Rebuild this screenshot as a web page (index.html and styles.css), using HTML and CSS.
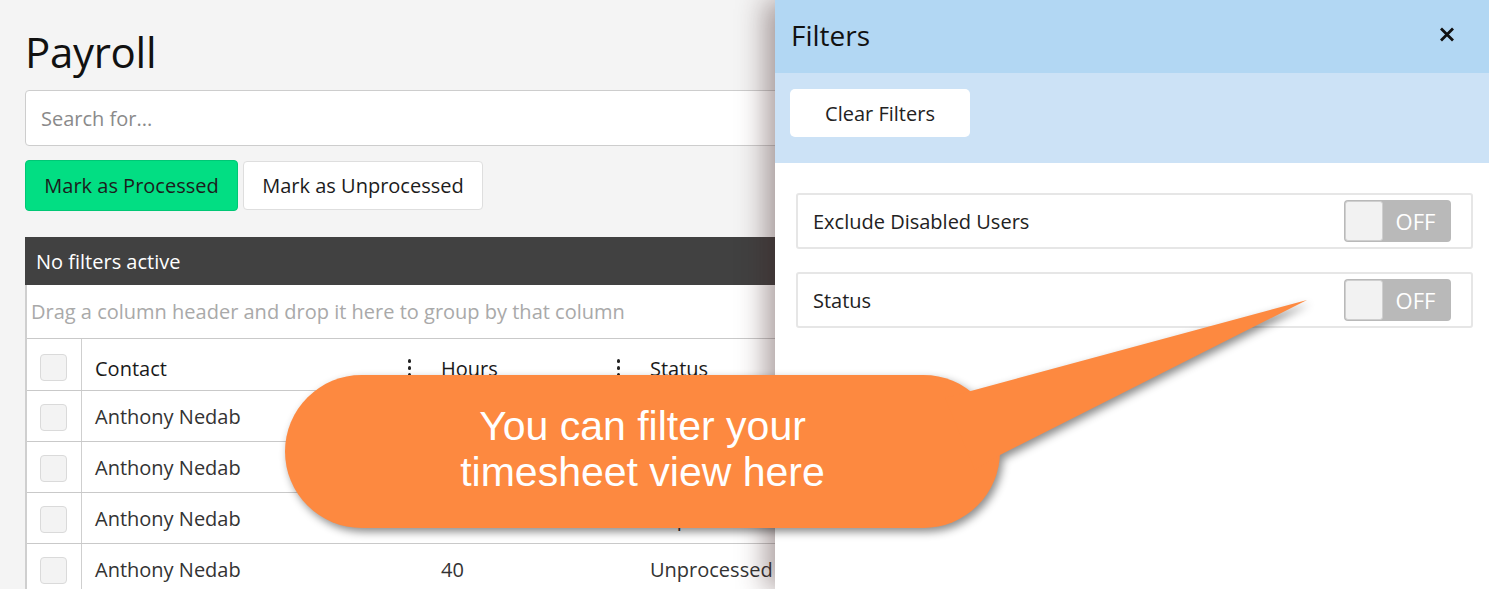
FILE: index.html
```html
<!DOCTYPE html>
<html lang="en">
<head>
<meta charset="utf-8">
<title>Payroll</title>
<link rel="stylesheet" href="styles.css">
</head>
<body>
<main class="page">
  <h1 class="title">Payroll</h1>
  <input class="search" type="text" placeholder="Search for...">
  <div class="actions">
    <button class="btn btn-green">Mark as Processed</button>
    <button class="btn btn-white">Mark as Unprocessed</button>
  </div>
  <section class="grid">
    <div class="grid-bar">No filters active</div>
    <div class="grid-frame">
      <div class="group-row">Drag a column header and drop it here to group by that column</div>
      <div class="row head">
        <div class="cell chk"><span class="box"></span></div>
        <div class="cell">Contact<span class="kebab"><i></i><i></i><i></i></span></div>
        <div class="cell">Hours<span class="kebab"><i></i><i></i><i></i></span></div>
        <div class="cell">Status</div>
      </div>
      <div class="row">
        <div class="cell chk"><span class="box"></span></div>
        <div class="cell">Anthony Nedab</div>
        <div class="cell">40</div>
        <div class="cell"></div>
      </div>
      <div class="row">
        <div class="cell chk"><span class="box"></span></div>
        <div class="cell">Anthony Nedab</div>
        <div class="cell"></div>
        <div class="cell"></div>
      </div>
      <div class="row">
        <div class="cell chk"><span class="box"></span></div>
        <div class="cell">Anthony Nedab</div>
        <div class="cell">40</div>
        <div class="cell">Unprocessed</div>
      </div>
      <div class="row">
        <div class="cell chk"><span class="box"></span></div>
        <div class="cell">Anthony Nedab</div>
        <div class="cell">40</div>
        <div class="cell">Unprocessed</div>
      </div>
    </div>
  </section>
</main>

<aside class="drawer">
  <header class="drawer-head">
    <h2 class="drawer-title">Filters</h2>
    <button class="close" aria-label="Close">
      <svg width="16" height="15" viewBox="0 0 16 15"><path d="M2 1.5 L14 13.5 M14 1.5 L2 13.5" stroke="#111" stroke-width="2.8" stroke-linecap="butt"/></svg>
    </button>
  </header>
  <div class="drawer-tools">
    <button class="clear">Clear Filters</button>
  </div>
  <div class="drawer-body">
    <div class="filter">
      <span class="filter-label">Exclude Disabled Users</span>
      <span class="toggle"><span class="knob"></span><span class="off">OFF</span></span>
    </div>
    <div class="filter">
      <span class="filter-label">Status</span>
      <span class="toggle"><span class="knob"></span><span class="off">OFF</span></span>
    </div>
  </div>
</aside>

<div class="callout">
  <svg class="callout-shape" width="1030" height="250" viewBox="0 0 1030 250">
    <rect x="0" y="85" width="715" height="153" rx="76.5" ry="76.5" fill="#fd8940"/>
    <polygon points="660,108 1022,10 715,165 690,180" fill="#fd8940"/>
  </svg>
  <div class="callout-text">You can filter your<br>timesheet view here</div>
</div>
</body>
</html>
```

FILE: styles.css
```css
* { box-sizing: border-box; }

html, body {
  margin: 0;
  height: 589px;
  overflow: hidden;
}

body {
  background: #f4f4f4;
  font-family: "Open Sans", "Liberation Sans", sans-serif;
  color: #333;
  position: relative;
}

.page {
  padding: 28px 0 0 25px;
  display: flex;
  flex-direction: column;
  width: 1489px;
}

.title {
  margin: 0;
  font-size: 42px;
  line-height: 48px;
  font-weight: 400;
  color: #111;
  letter-spacing: -0.3px;
}

.search {
  margin-top: 14px;
  height: 56px;
  width: 1000px;
  border: 1px solid #cdcdcd;
  border-radius: 4px;
  background: #fff;
  padding: 0 15px;
  font-family: inherit;
  font-size: 20px;
  color: #333;
  outline: none;
}
.search::placeholder { color: #8a8a8a; }

.actions {
  margin-top: 14px;
  display: flex;
  gap: 5px;
  align-items: center;
}

.btn {
  font-family: inherit;
  font-size: 20px;
  color: #1c1c1c;
  border-radius: 4px;
  padding: 0 18px;
}
.btn-green {
  height: 51px;
  width: 213px;
  background: #02de83;
  border: 1px solid #00c775;
}
.btn-white {
  height: 49px;
  width: 240px;
  background: #fff;
  border: 1px solid #dedede;
}

.grid {
  margin-top: 26px;
  width: 1000px;
}

.grid-bar {
  height: 48px;
  background: #414141;
  color: #fff;
  font-size: 20px;
  display: flex;
  align-items: center;
  padding-left: 11px;
}

.grid-frame {
  background: #fff;
  border-left: 2px solid #cfcfcf;
}

.group-row {
  height: 54px;
  border-bottom: 1px solid #c9c9c9;
  display: flex;
  align-items: center;
  padding-left: 4px;
  font-size: 20px;
  color: #a9a9a9;
}

.row {
  display: grid;
  grid-template-columns: 55px 346px 209px 1fr;
  height: 51px;
  border-bottom: 1px solid #c9c9c9;
  font-size: 20px;
  color: #333;
}
.row.head { color: #1a1a1a; height: 52px; }
.row.head .cell { padding-top: 7px; }
.row.head .cell.chk { padding-top: 5px; }

.cell {
  display: flex;
  align-items: center;
  padding-left: 13px;
  position: relative;
}
.cell.chk {
  padding-left: 0;
  justify-content: center;
  border-right: 1px solid #cfcfcf;
}
.row:not(.head) .cell.chk { padding-top: 3px; }

.box {
  width: 27px;
  height: 27px;
  border: 1px solid #dadada;
  border-radius: 4px;
  background: #f3f3f3;
  margin-right: 1px;
}

.kebab {
  position: absolute;
  right: 17px;
  top: 20px;
  display: flex;
  flex-direction: column;
  gap: 3.5px;
}
.kebab i {
  display: block;
  width: 3.5px;
  height: 3.5px;
  border-radius: 50%;
  background: #222;
}

/* Drawer overlay */
.drawer {
  position: absolute;
  top: 0;
  right: 0;
  width: 714px;
  height: 589px;
  background: #fff;
  box-shadow: -10px 0 26px rgba(60, 30, 30, 0.42);
  display: flex;
  flex-direction: column;
  z-index: 2;
}

.drawer-head {
  height: 73px;
  background: #b2d7f3;
  display: flex;
  align-items: center;
  justify-content: space-between;
  padding: 0 34px 3px 16px;
}
.drawer-title {
  margin: 0;
  font-size: 28px;
  font-weight: 400;
  color: #111;
}
.close {
  border: 0;
  background: transparent;
  padding: 0;
  width: 16px;
  height: 15px;
  display: flex;
  margin-top: -2px;
}

.drawer-tools {
  height: 90px;
  background: #cce2f6;
  padding: 16px 15px;
}
.clear {
  width: 180px;
  height: 48px;
  background: #fff;
  border: 0;
  border-radius: 5px;
  font-family: inherit;
  font-size: 20px;
  color: #222;
}

.drawer-body {
  padding: 30px 16px 0 21px;
  display: flex;
  flex-direction: column;
  gap: 23px;
}

.filter {
  height: 56px;
  border: 2px solid #e6e6e6;
  border-radius: 3px;
  display: flex;
  align-items: center;
  justify-content: space-between;
  padding: 0 20px 0 15px;
  font-size: 20px;
  color: #222;
}

.toggle {
  width: 107px;
  height: 42px;
  background: #b9b9b9;
  border-radius: 4px;
  display: flex;
  align-items: stretch;
  padding: 1px;
}
.knob {
  width: 38px;
  background: #f2f2f2;
  border: 1px solid #cfcfcf;
  border-radius: 3px;
}
.off {
  flex: 1;
  display: flex;
  align-items: center;
  justify-content: center;
  color: #fff;
  font-size: 22px;
  padding-right: 2px;
}

/* Annotation callout */
.callout {
  position: absolute;
  left: 285px;
  top: 290px;
  width: 1030px;
  height: 250px;
  z-index: 3;
}
.callout-shape {
  position: absolute;
  left: 0;
  top: 0;
  filter: drop-shadow(3px 4px 4px rgba(0, 0, 0, 0.45));
}
.callout-text {
  position: absolute;
  left: 0;
  top: 113px;
  width: 715px;
  text-align: center;
  font-family: "Liberation Sans", Arial, sans-serif;
  font-size: 41px;
  line-height: 46px;
  color: #fff;
}
```
